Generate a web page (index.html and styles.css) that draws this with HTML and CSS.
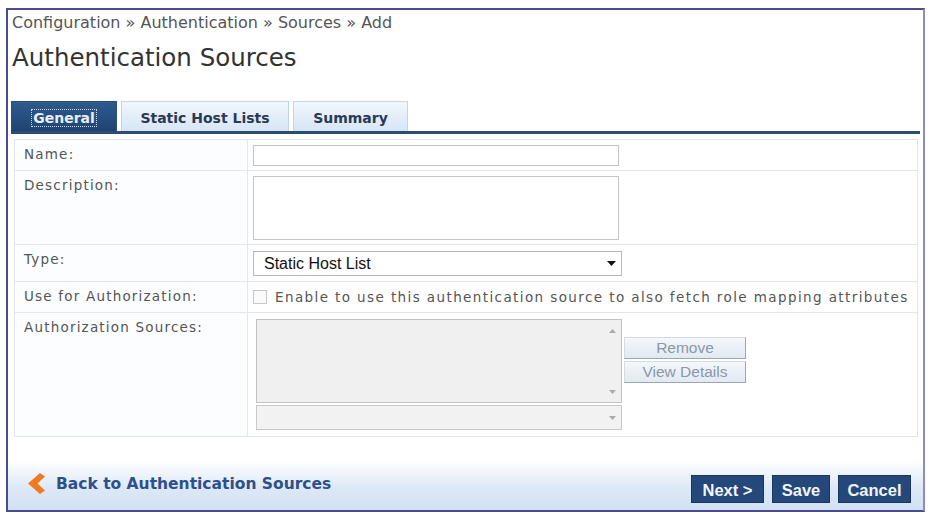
FILE: index.html
```html
<!DOCTYPE html>
<html lang="en">
<head>
    <meta charset="UTF-8">
    <title>Authentication Sources</title>
    <link rel="stylesheet" href="styles.css">
</head>
<body>
    <div class="frame">
        <div class="crumbs">Configuration &raquo; Authentication &raquo; Sources &raquo; Add</div>
        <h1 class="title">Authentication Sources</h1>

        <div class="tabs">
            <div class="tab active"><span>General</span></div>
            <div class="tab">Static Host Lists</div>
            <div class="tab">Summary</div>
        </div>

        <div class="form">
            <div class="row row-name">
                <div class="label">Name:</div>
                <div class="field"><div class="input"></div></div>
            </div>
            <div class="row row-desc">
                <div class="label">Description:</div>
                <div class="field"><div class="textarea"></div></div>
            </div>
            <div class="row row-type">
                <div class="label">Type:</div>
                <div class="field">
                    <div class="select">
                        <span>Static Host List</span>
                        <svg width="9" height="5" viewBox="0 0 9 5"><path d="M0 0h9L4.5 5z" fill="#111"/></svg>
                    </div>
                </div>
            </div>
            <div class="row row-auth">
                <div class="label">Use for Authorization:</div>
                <div class="field check">
                    <span class="box"></span>
                    <span>Enable to use this authentication source to also fetch role mapping attributes</span>
                </div>
            </div>
            <div class="row row-src">
                <div class="label">Authorization Sources:</div>
                <div class="field sources">
                    <div class="lists">
                        <div class="listbox">
                            <svg class="up" width="7" height="4" viewBox="0 0 7 4"><path d="M0 4h7L3.5 0z" fill="#aaa"/></svg>
                            <svg class="down" width="7" height="4" viewBox="0 0 7 4"><path d="M0 0h7L3.5 4z" fill="#aaa"/></svg>
                        </div>
                        <div class="dropdown">
                            <svg width="7" height="4" viewBox="0 0 7 4"><path d="M0 0h7L3.5 4z" fill="#aaa"/></svg>
                        </div>
                    </div>
                    <div class="side-buttons">
                        <div class="gbtn">Remove</div>
                        <div class="gbtn">View Details</div>
                    </div>
                </div>
            </div>
        </div>

        <div class="footer">
            <a class="back">
                <svg width="19" height="21" viewBox="0 0 19 21"><path d="M13 0L1 10.5 13 21l5-3.5-7.5-7 7.5-7z" fill="#f07a1e"/></svg>
                Back to Authentication Sources
            </a>
            <div class="actions">
                <div class="btn">Next &gt;</div>
                <div class="btn save">Save</div>
                <div class="btn">Cancel</div>
            </div>
        </div>
    </div>
</body>
</html>
```

FILE: styles.css
```css
body{
    margin:0;
    padding:0;
    background:#fff;
    font-family:"DejaVu Sans",Verdana,sans-serif;
}
.frame{
    margin:8px 6px 3px 6px;
    height:504px;
    border:2px solid #4a4a96;
    border-right-color:#8c8cc4;
    box-sizing:border-box;
    padding:3px 3px 0 3px;
    display:flex;
    flex-direction:column;
}
.crumbs{
    font-size:16px;
    color:#555;
    padding-left:1px;
}
.title{
    font-size:24.5px;
    font-weight:normal;
    color:#333;
    margin:11px 0 0 1px;
}
.tabs{
    display:flex;
    gap:4px;
    margin-top:29px;
    border-bottom:3px solid #2c4c72;
}
.tab{
    height:30px;
    line-height:32px;
    font-size:14px;
    font-weight:bold;
    color:#2a3a55;
    background:linear-gradient(#f2f7fd,#d6e5f6);
    border:1px solid #c4d4e8;
    border-bottom:0;
    box-sizing:border-box;
    text-align:center;
    width:168px;
}
.tab:last-child{
    width:115px;
}
.tab.active{
    width:106px;
    background:linear-gradient(#2e5a8e,#1f4472);
    border-color:#2c4c72;
    color:#e6eef8;
}
.tab.active span{
    border:1px dotted #c8d6e8;
    padding:0 1px;
}
.form{
    margin:5px 2px 0 3px;
    border:1px solid #e2e6ea;
}
.row{
    display:flex;
    border-bottom:1px solid #e4e7ea;
}
.row:last-child{
    border-bottom:0;
}
.label{
    width:223px;
    flex-shrink:0;
    border-right:1px solid #e4e7ea;
    background:#fbfdfe;
    font-size:13.5px;
    color:#555;
    padding:6px 0 0 9px;
    letter-spacing:1.2px;
}
.field{
    padding:5px 0 0 5px;
}
.row-name{ height:30px; }
.row-desc{ height:73px; }
.row-type{ height:36px; }
.row-auth{ height:30px; }
.row-src{ height:123px; }
.row-type .label{ padding-top:6px; }
.input{
    width:366px;
    height:21px;
    border:1px solid #c4c4c4;
    box-sizing:border-box;
}
.textarea{
    width:366px;
    height:64px;
    border:1px solid #c4c4c4;
    box-sizing:border-box;
}
.select{
    width:369px;
    height:25px;
    margin-top:1px;
    border:1px solid #b8b8b8;
    box-sizing:border-box;
    display:flex;
    align-items:center;
    justify-content:space-between;
    padding:0 5px 0 10px;
    font-family:"Liberation Sans",Arial,sans-serif;
    font-size:16px;
    color:#111;
}
.check{
    display:flex;
    align-items:center;
    gap:8px;
    padding-top:0;
    font-size:13.5px;
    color:#555;
    letter-spacing:1.4px;
}
.box{
    width:14px;
    height:14px;
    border:1px solid #c8c8c8;
    box-sizing:border-box;
    background:#fafafa;
}
.sources{
    display:flex;
    padding:6px 0 0 8px;
}
.lists{
    display:flex;
    flex-direction:column;
    gap:2px;
}
.listbox{
    position:relative;
    width:366px;
    height:84px;
    background:#f0f0f0;
    border:1px solid #c2c2c2;
    box-sizing:border-box;
}
.listbox .up{
    position:absolute;
    right:5px;
    top:9px;
}
.listbox .down{
    position:absolute;
    right:5px;
    bottom:8px;
}
.dropdown{
    width:366px;
    height:25px;
    background:#f2f2f2;
    border:1px solid #c8c8c8;
    box-sizing:border-box;
    display:flex;
    align-items:center;
    justify-content:flex-end;
    padding-right:5px;
}
.side-buttons{
    display:flex;
    flex-direction:column;
    gap:2px;
    margin:18px 0 0 2px;
}
.gbtn{
    width:122px;
    height:22px;
    box-sizing:border-box;
    background:linear-gradient(#f4f7fb,#e2e9f2);
    border:1px solid #d4dbe4;
    border-right-color:#9aa6b6;
    border-bottom-color:#9aa6b6;
    font-family:"Liberation Sans",Arial,sans-serif;
    font-size:15.5px;
    color:#8a97aa;
    text-align:center;
    line-height:20px;
}
.footer{
    margin-top:auto;
    height:48px;
    background:linear-gradient(#fdfeff,#dce8f6 55%,#d2e1f2);
    display:flex;
    align-items:center;
    justify-content:space-between;
    padding:0 12px 0 19px;
    margin-left:-3px;
    margin-right:-3px;
}
.back{
    display:flex;
    align-items:center;
    gap:10px;
    font-size:15.5px;
    font-weight:bold;
    color:#2f4f8a;
    margin-top:-5px;
}
.actions{
    display:flex;
    gap:8px;
    margin-top:5px;
}
.btn{
    width:73px;
    height:28px;
    line-height:28px;
    box-sizing:border-box;
    text-align:center;
    background:#24487a;
    border:1px solid #1a3560;
    color:#f2f5fa;
    font-family:"Liberation Sans",Arial,sans-serif;
    font-size:16.5px;
    font-weight:bold;
}
.btn.save{
    width:58px;
}
```
